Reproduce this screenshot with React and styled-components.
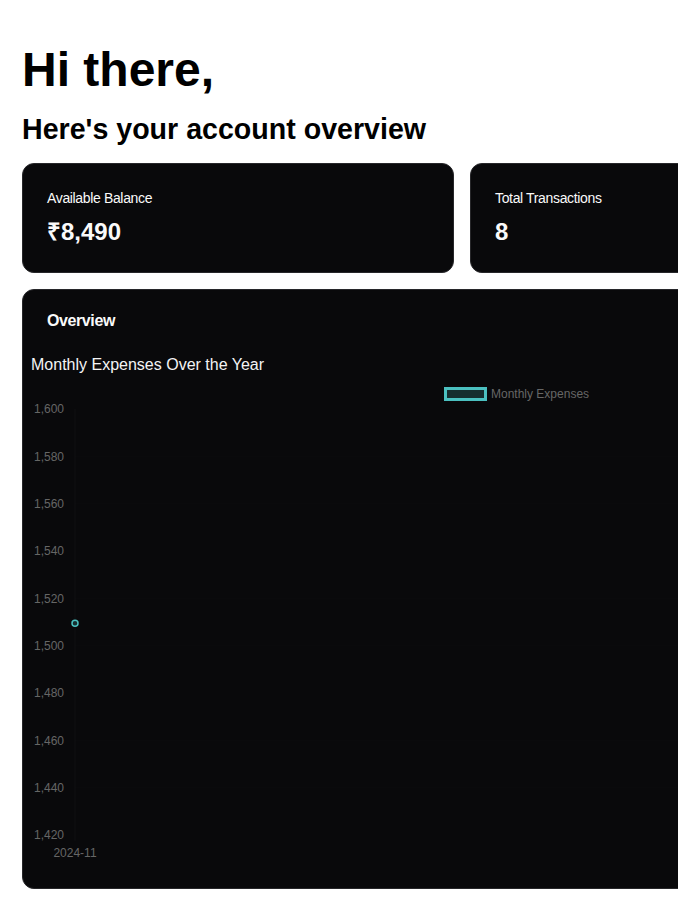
import React from 'react';
import styled, { createGlobalStyle } from 'styled-components';

const GlobalStyle = createGlobalStyle`
    html, body {
        margin: 0;
        padding: 0;
        background: #ffffff;
        overflow-x: hidden;
    }
    body {
        font-family: "Liberation Sans", Arial, sans-serif;
        color: #000000;
    }
`;

const Page = styled.div`
    padding: 42px 22px 24px;
    width: 1008px;
`;

const Greeting = styled.h1`
    margin: 0 0 15px;
    font-size: 48px;
    line-height: 56px;
    font-weight: 700;
`;

const SubHeading = styled.h2`
    margin: 0 0 18px;
    font-size: 28.6px;
    line-height: 32px;
    font-weight: 700;
`;

const StatsGrid = styled.div`
    display: grid;
    grid-template-columns: 432px 432px;
    gap: 16px;
    margin-bottom: 16px;
`;

const Card = styled.div`
    background: #09090b;
    border: 1px solid #27272a;
    border-radius: 12px;
    color: #fafafa;
    width: ${props => props.$width || 'auto'};
    box-sizing: border-box;
`;

const StatHeader = styled.div`
    padding: 24px 24px 8px;
    font-size: 14px;
    line-height: 20px;
    font-weight: 400;
    letter-spacing: -0.025em;
`;

const StatValue = styled.div`
    padding: 0 24px 24px;
    font-size: 24px;
    line-height: 32px;
    font-weight: 700;
`;

const CardTitle = styled.div`
    padding: 23px 24px 25px;
    font-size: 16px;
    line-height: 16px;
    font-weight: 700;
    letter-spacing: -0.025em;
`;

const ChartBody = styled.div`
    padding: 0 24px 24px 8px;
`;

const ChartTitle = styled.div`
    padding-top: 2px;
    font-size: 16px;
    color: #f4f4f5;
`;

const ChartSvg = styled.svg`
    display: block;
`;

const teal = 'rgb(75, 192, 192)';

const ExpenseChart = ({ data }) => {
    const width = 974;
    const height = 490;
    const top = 35;
    const step = 47.33;
    const ticks = [1600, 1580, 1560, 1540, 1520, 1500, 1480, 1460, 1440, 1420];
    const axisX = 44;
    const toY = v => top + ((1600 - v) / 20) * step;

    return (
        <ChartSvg width={width} height={height} viewBox={`0 0 ${width} ${height}`}>
            {/* legend */}
            <rect x="414.5" y="14.5" width="40" height="11" fill="rgba(75,192,192,0.2)" stroke={teal} strokeWidth="3" />
            <text x="460" y="23.5" fontSize="12" fill="#666" fontFamily="Liberation Sans, Arial, sans-serif">
                Monthly Expenses
            </text>

            {/* grid */}
            {ticks.map(t => (
                <line key={t} x1={axisX} x2={width} y1={toY(t)} y2={toY(t)} stroke="rgba(255,255,255,0.01)" />
            ))}
            <line x1={axisX} x2={axisX} y1={top} y2={toY(1420) + 6} stroke="rgba(255,255,255,0.03)" />

            {ticks.map(t => (
                <text
                    key={t}
                    x="33"
                    y={toY(t) + 4.3}
                    textAnchor="end"
                    fontSize="12"
                    fill="#666"
                    fontFamily="Liberation Sans, Arial, sans-serif"
                >
                    {t.toLocaleString('en-US')}
                </text>
            ))}

            {data.map(d => (
                <g key={d.month}>
                    <circle cx={axisX} cy={toY(d.value)} r="3" fill="rgba(75,192,192,0.2)" stroke={teal} strokeWidth="1.5" />
                    <text
                        x={axisX}
                        y="483.3"
                        textAnchor="middle"
                        fontSize="12"
                        fill="#666"
                        fontFamily="Liberation Sans, Arial, sans-serif"
                    >
                        {d.month}
                    </text>
                </g>
            ))}
        </ChartSvg>
    );
};

const App = () => {
    const stats = [
        { label: 'Available Balance', value: '₹8,490' },
        { label: 'Total Transactions', value: '8' }
    ];
    const expenses = [{ month: '2024-11', value: 1509.5 }];

    return (
        <Page>
            <GlobalStyle />
            <Greeting>Hi there,</Greeting>
            <SubHeading>Here's your account overview</SubHeading>

            <StatsGrid>
                {stats.map(s => (
                    <Card key={s.label}>
                        <StatHeader>{s.label}</StatHeader>
                        <StatValue>{s.value}</StatValue>
                    </Card>
                ))}
            </StatsGrid>

            <Card $width="1008px">
                <CardTitle>Overview</CardTitle>
                <ChartBody>
                    <ChartTitle>Monthly Expenses Over the Year</ChartTitle>
                    <ExpenseChart data={expenses} />
                </ChartBody>
            </Card>
        </Page>
    );
};

export default App;
